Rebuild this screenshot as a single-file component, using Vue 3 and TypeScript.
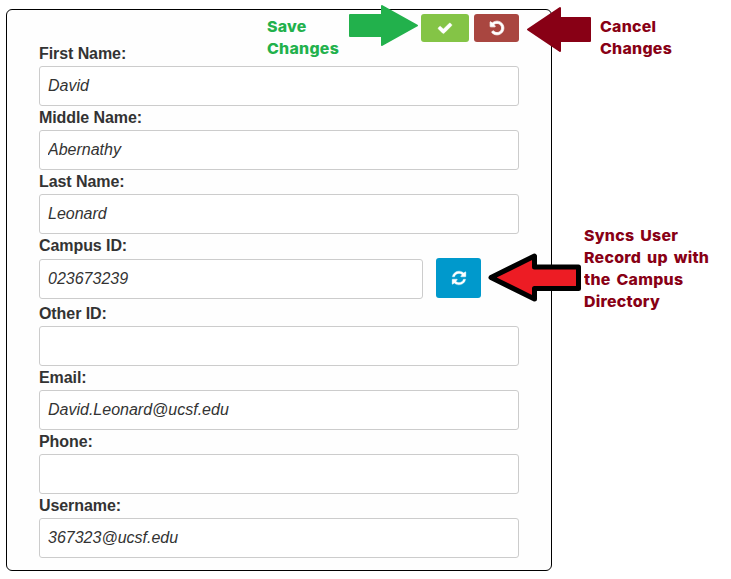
<script setup lang="ts">
import { ref } from 'vue'

interface Field {
  id: string
  label: string
  value: string
  sync?: boolean
}

interface Note {
  id: string
  lines: string[]
}

const fields = ref<Field[]>([
  { id: 'first', label: 'First Name:', value: 'David' },
  { id: 'middle', label: 'Middle Name:', value: 'Abernathy' },
  { id: 'last', label: 'Last Name:', value: 'Leonard' },
  { id: 'campus', label: 'Campus ID:', value: '023673239', sync: true },
  { id: 'other', label: 'Other ID:', value: '' },
  { id: 'email', label: 'Email:', value: 'David.Leonard@ucsf.edu' },
  { id: 'phone', label: 'Phone:', value: '' },
  { id: 'username', label: 'Username:', value: '367323@ucsf.edu' },
])

const notes: Note[] = [
  { id: 'save', lines: ['Save', 'Changes'] },
  { id: 'cancel', lines: ['Cancel', 'Changes'] },
  { id: 'sync', lines: ['Syncs User', 'Record up with', 'the Campus', 'Directory'] },
]
</script>

<template>
  <main class="page">
    <form class="card" @submit.prevent>
      <div class="toolbar">
        <button class="btn save" type="button" aria-label="Save">
          <svg viewBox="0 0 1792 1792"><path d="M1671 566q0 40-28 68l-724 724-136 136q-28 28-68 28t-68-28l-136-136-362-362q-28-28-28-68t28-68l136-136q28-28 68-28t68 28l294 295 656-657q28-28 68-28t68 28l136 136q28 28 28 68z" /></svg>
        </button>
        <button class="btn cancel" type="button" aria-label="Cancel">
          <svg viewBox="0 0 1792 1792"><path d="M1664 896q0 156-61 298t-164 245-245 164-298 61q-172 0-327-72.5t-264-204.5q-7-10-6.5-22.5t8.5-20.5l137-138q10-9 25-9 16 2 23 12 73 95 179 147t225 52q104 0 198.5-40.5t163.5-109.5 109.5-163.5 40.5-198.5-40.5-198.5-109.5-163.5-163.5-109.5-198.5-40.5q-98 0-188 35.5t-160 101.5l137 138q31 30 14 69-17 40-59 40h-448q-26 0-45-19t-19-45v-448q0-42 40-59 39-17 69 14l130 129q107-101 244.5-156.5t284.5-55.5q156 0 298 61t245 164 164 245 61 298z" /></svg>
        </button>
      </div>
      <div v-for="f in fields" :key="f.id" class="field" :class="{ 'with-sync': f.sync }">
        <label :for="f.id">{{ f.label }}</label>
        <div class="control">
          <input :id="f.id" v-model="f.value" type="text" spellcheck="false" />
          <button v-if="f.sync" class="btn sync" type="button" aria-label="Sync">
            <svg viewBox="0 0 1792 1792"><path d="M1639 1056q0 5-1 7-64 268-268 434.5t-478 166.5q-146 0-282.5-55t-243.5-157l-129 129q-19 19-45 19t-45-19-19-45v-448q0-26 19-45t45-19h448q26 0 45 19t19 45-19 45l-137 137q71 66 161 102t187 36q134 0 250-65t186-179q11-17 53-117 8-23 30-23h192q13 0 22.5 9.5t9.5 22.5zm25-800v448q0 26-19 45t-45 19h-448q-26 0-45-19t-19-45 19-45l138-138q-148-137-349-137-134 0-250 65t-186 179q-11 17-53 117-8 23-30 23h-199q-13 0-22.5-9.5t-9.5-22.5v-7q65-268 270-434.5t480-166.5q146 0 284 55.5t245 156.5l130-129q19-19 45-19t45 19 19 45z" /></svg>
          </button>
        </div>
      </div>
    </form>

    <svg class="arrows" viewBox="0 0 731 579" aria-hidden="true">
      <path class="arrow-save" d="M350 15H382V6L417 25.5L382 45V36H350Z" />
      <path class="arrow-cancel" d="M528 29.5L560 8V18H590V41H560V51Z" />
      <path class="arrow-sync" d="M491 277.5L534.5 256V267H578.5V288.5H534.5V299Z" />
    </svg>

    <div v-for="n in notes" :key="n.id" class="note" :class="'note-' + n.id">
      <div v-for="l in n.lines" :key="l">{{ l }}</div>
    </div>
  </main>
</template>

<style>
body {
  background: #fff;
}
</style>

<style scoped>
.page {
  position: relative;
  box-sizing: border-box;
  width: 731px;
  height: 579px;
  padding: 9px 0 0 6px;
  overflow: hidden;
  font-family: "Liberation Sans", Arial, sans-serif;
}
.card {
  box-sizing: border-box;
  width: 546px;
  height: 562px;
  padding: 4px 32px 0;
  border: 1px solid #000;
  border-radius: 6px;
  background: #fefefe;
}
.toolbar {
  display: flex;
  justify-content: flex-end;
  gap: 5px;
  height: 28px;
}
.btn {
  display: flex;
  align-items: center;
  justify-content: center;
  padding: 0;
  border: 0;
  border-radius: 3px;
}
.btn svg {
  display: block;
  width: 16px;
  height: 16px;
  overflow: visible;
  fill: #fff;
  stroke: #fff;
  stroke-width: 40;
}
.save {
  width: 48px;
  background: #84c446;
}
.cancel {
  width: 45px;
  background: #a94640;
}
.btn.cancel svg {
  stroke-width: 90;
}
.sync {
  width: 45px;
  height: 40px;
  margin-top: -1px;
  background: #0099cc;
}
.field {
  height: 64px;
}
label {
  display: block;
  height: 24px;
  line-height: 23px;
  font-size: 16px;
  font-weight: 700;
  letter-spacing: -0.08px;
  color: #333;
}
.control {
  display: flex;
  gap: 13px;
}
input {
  box-sizing: border-box;
  flex: 1;
  min-width: 0;
  height: 40px;
  padding: 0 8px;
  border: 1px solid #ccc;
  border-radius: 3px;
  outline: 0;
  background: #fff;
  font: italic 16px "Liberation Sans", Arial, sans-serif;
  color: #333;
}
.with-sync {
  height: 68px;
}
.with-sync .control {
  padding: 1px 38px 0 0;
}
.arrows {
  position: absolute;
  inset: 0;
  width: 731px;
  height: 579px;
  pointer-events: none;
}
.arrows path {
  stroke-width: 2;
  stroke-linejoin: round;
}
.arrow-save {
  fill: #22b14c;
  stroke: #22b14c;
}
.arrow-cancel {
  fill: #880015;
  stroke: #880015;
}
.arrows .arrow-sync {
  fill: #ed1c24;
  stroke: #000;
  stroke-width: 5;
}
.note {
  position: absolute;
  line-height: 22px;
  font-family: Inter, "Liberation Sans", sans-serif;
  font-size: 15px;
  font-weight: 800;
  letter-spacing: 0.25px;
  word-spacing: 2px;
  color: #880015;
  white-space: nowrap;
  transform: scaleX(1.06);
  transform-origin: 0 0;
}
.note-save {
  left: 267px;
  top: 16px;
  color: #22b14c;
}
.note-cancel {
  left: 600px;
  top: 16px;
}
.note-sync {
  left: 584px;
  top: 225px;
}
</style>
